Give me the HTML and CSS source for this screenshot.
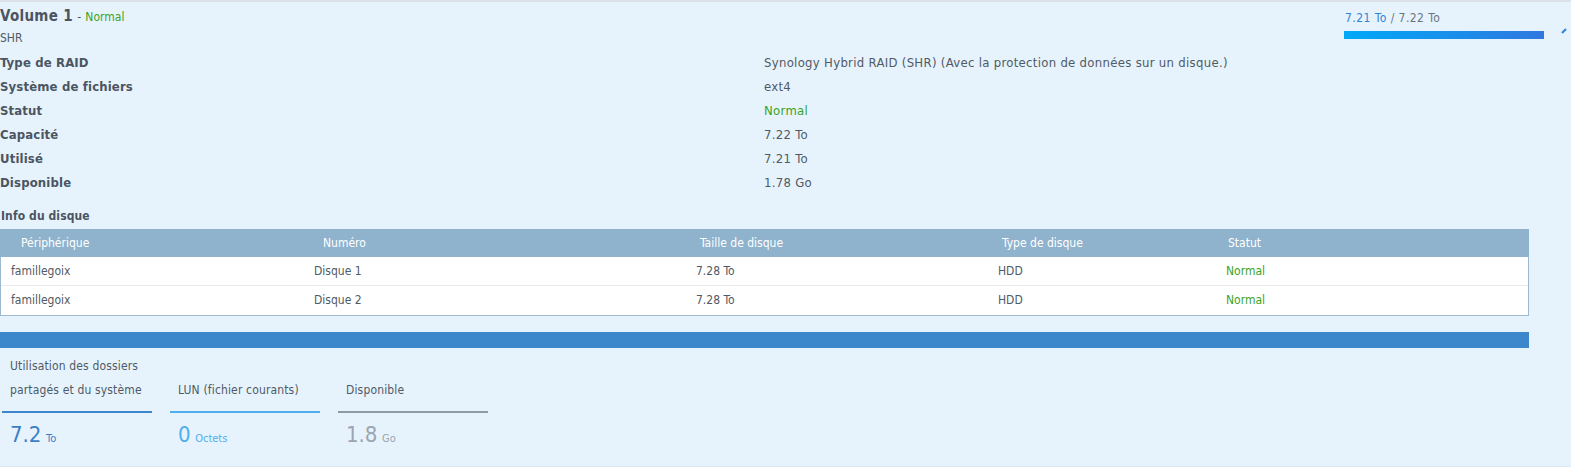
FILE: index.html
```html
<!DOCTYPE html>
<html lang="fr">
<head>
<meta charset="utf-8">
<title>Volume 1</title>
<link rel="stylesheet" href="styles.css">
</head>
<body>
<div class="panel">
  <div class="head">
    <div class="title-block">
      <div class="title"><span class="vol">Volume 1</span> <span class="dash">-</span> <span class="ok small">Normal</span></div>
      <div class="sub">SHR</div>
    </div>
    <div class="usage">
      <div class="usage-text"><span class="used">7.21 To</span> / 7.22 To</div>
      <div class="usage-bar"><div class="usage-fill" style="width:100%"></div></div>
    </div>
    <div class="edge-icon"><svg width="10" height="10" viewBox="0 0 10 10"><path d="M1 9 L5 5" stroke="#2f86e0" stroke-width="2.2" fill="none"/></svg></div>
  </div>

  <div class="details">
    <div class="lbl">Type de RAID</div><div class="val">Synology Hybrid RAID (SHR) (Avec la protection de données sur un disque.)</div>
    <div class="lbl">Système de fichiers</div><div class="val">ext4</div>
    <div class="lbl">Statut</div><div class="val ok">Normal</div>
    <div class="lbl">Capacité</div><div class="val">7.22 To</div>
    <div class="lbl">Utilisé</div><div class="val">7.21 To</div>
    <div class="lbl">Disponible</div><div class="val">1.78 Go</div>
  </div>

  <div class="section-title">Info du disque</div>
  <div class="grid">
    <div class="grow ghead">
      <div class="gc">Périphérique</div>
      <div class="gc">Numéro</div>
      <div class="gc">Taille de disque</div>
      <div class="gc">Type de disque</div>
      <div class="gc">Statut</div>
    </div>
    <div class="grow">
      <div class="gc">famillegoix</div>
      <div class="gc">Disque 1</div>
      <div class="gc">7.28 To</div>
      <div class="gc">HDD</div>
      <div class="gc ok">Normal</div>
    </div>
    <div class="grow">
      <div class="gc">famillegoix</div>
      <div class="gc">Disque 2</div>
      <div class="gc">7.28 To</div>
      <div class="gc">HDD</div>
      <div class="gc ok">Normal</div>
    </div>
  </div>

  <div class="bigbar"></div>

  <div class="stats">
    <div class="stat s-sys">
      <div class="stat-lbl">Utilisation des dossiers<br>partagés et du système</div>
      <div class="stat-num"><span class="n">7.2</span> <span class="u">To</span></div>
    </div>
    <div class="stat s-lun">
      <div class="stat-lbl">LUN (fichier courants)</div>
      <div class="stat-num"><span class="n">0</span> <span class="u">Octets</span></div>
    </div>
    <div class="stat s-free">
      <div class="stat-lbl">Disponible</div>
      <div class="stat-num"><span class="n">1.8</span> <span class="u">Go</span></div>
    </div>
  </div>
</div>
</body>
</html>
```

FILE: styles.css
```css
html, body {
  margin: 0;
  padding: 0;
  background: #ffffff;
}
body {
  font-family: "DejaVu Sans Condensed", "DejaVu Sans", sans-serif;
  color: #505a64;
  overflow: hidden;
}
.panel {
  background: #e6f3fd;
  border-top: 2px solid #dae1e8;
  border-bottom: 1px solid #dbe7f1;
  height: 467px;
  box-sizing: border-box;
}
.ok { color: #3aa31f; }

.head {
  display: flex;
  align-items: flex-start;
}
.title-block { flex: 1; }
.title {
  height: 25px;
  line-height: 28px;
  font-size: 15px;
  color: #4b5561;
}
.vol { font-weight: bold; letter-spacing: 0.3px; }
.dash { font-size: 12px; }
.small { font-size: 12px; }
.sub {
  height: 24px;
  line-height: 22px;
  font-size: 12px;
  color: #505a64;
}
.usage {
  width: 200px;
  padding-top: 9px;
}
.usage-text {
  font-size: 12px;
  line-height: 14px;
  letter-spacing: 0.45px;
  color: #6b7580;
  padding-left: 1px;
}
.usage-text .used { color: #2e86d4; }
.usage-bar {
  margin-top: 6px;
  height: 8px;
  background: #d3e2ee;
}
.usage-fill {
  height: 100%;
  background: linear-gradient(90deg, #00a9f9, #2f78df);
}
.edge-icon {
  width: 27px;
  padding-top: 22px;
  display: flex;
  justify-content: flex-end;
}

.details {
  display: grid;
  grid-template-columns: 764px 1fr;
  grid-auto-rows: 24px;
  line-height: 24px;
  font-size: 13px;
}
.lbl {
  font-weight: bold;
  color: #4b5561;
  letter-spacing: 0.15px;
}
.val { color: #505a64; letter-spacing: 0.3px; }
.val.ok { color: #3aa31f; }

.section-title {
  margin-top: 9px;
  padding-left: 1px;
  line-height: 24px;
  font-size: 12px;
  font-weight: bold;
  letter-spacing: 0.1px;
  color: #4b5561;
}
.grid {
  margin-top: 1px;
  width: 1529px;
  background: #fff;
  border: 1px solid #9dbad1;
  border-top: none;
  box-sizing: border-box;
}
.grow {
  display: grid;
  grid-template-columns: 303px 382px 302px 228px 1fr;
  height: 29px;
  line-height: 28px;
  font-size: 12px;
  border-bottom: 1px solid #e8ecef;
  box-sizing: border-box;
}
.grow:last-child { border-bottom: none; }
.grow .gc { padding-left: 10px; }
.grow .gc.ok { color: #3aa31f; }
.ghead {
  height: 28px;
  background: #8fb2cd;
  color: #ffffff;
  border-bottom: none;
  margin: 0 -1px;
  padding: 0 1px;
}
.ghead .gc:nth-child(1) { padding-left: 20px; }
.ghead .gc:nth-child(2) { padding-left: 19px; }
.ghead .gc:nth-child(3) { padding-left: 14px; }
.ghead .gc:nth-child(4) { padding-left: 14px; }
.ghead .gc:nth-child(5) { padding-left: 12px; }

.bigbar {
  margin-top: 16px;
  width: 1529px;
  height: 16px;
  background: #3c86cc;
}

.stats {
  display: flex;
  gap: 18px;
  padding-left: 2px;
  padding-top: 6px;
}
.stat {
  width: 150px;
  display: flex;
  flex-direction: column;
}
.stat-lbl {
  height: 48px;
  display: flex;
  align-items: flex-end;
  padding-left: 8px;
  font-size: 12px;
  line-height: 24px;
  letter-spacing: 0.15px;
  color: #505a64;
  border-bottom: 2px solid #3c86cc;
  padding-bottom: 9px;
  white-space: nowrap;
}
.s-lun .stat-lbl { border-bottom-color: #4faeec; }
.s-free .stat-lbl { border-bottom-color: #8e9aa6; }
.stat-num {
  padding-left: 8px;
  padding-top: 8px;
  line-height: 28px;
}
.n { font-size: 22px; }
.u { font-size: 11px; }
.s-sys .stat-num { color: #3c7fc6; }
.s-lun .stat-num { color: #4faeec; }
.s-free .stat-num { color: #9aa5b1; }
```
